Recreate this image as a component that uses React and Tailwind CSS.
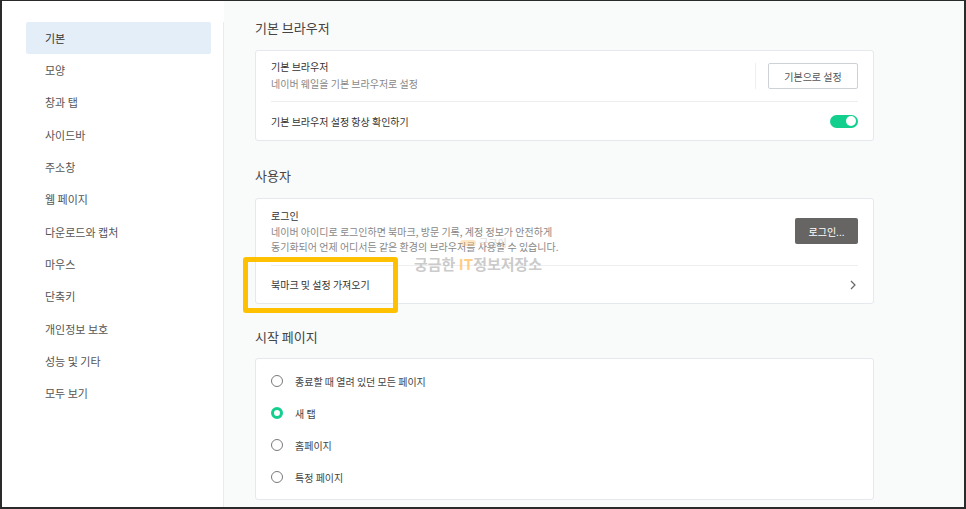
import React from 'react';

const menu = [
  '기본', '모양', '창과 탭', '사이드바', '주소창', '웹 페이지',
  '다운로드와 캡처', '마우스', '단축키', '개인정보 보호', '성능 및 기타', '모두 보기',
];

const startPages = [
  { label: '종료할 때 열려 있던 모든 페이지', checked: false },
  { label: '새 탭', checked: true },
  { label: '홈페이지', checked: false },
  { label: '특정 페이지', checked: false },
];

const Radio = ({ checked }) =>
  checked ? (
    <span className="w-[12px] h-[12px] rounded-full border-[3.5px] border-[#12cf8d] bg-white shrink-0" />
  ) : (
    <span className="w-[12px] h-[12px] rounded-full border border-[#7a7a7a] bg-white shrink-0" />
  );

const App = () => {
  return (
    <div className="w-[966px] h-[509px] overflow-hidden border-t border-l-2 border-r-2 border-b-2 border-[#2a2a2a] flex bg-white font-['Noto_Sans_CJK_KR',sans-serif]">
      {/* Sidebar */}
      <aside className="w-[222px] shrink-0 flex flex-col pt-[21px] bg-white">
        <nav className="flex-1 border-r border-[#e9ebee] pl-[24px] pr-[12px]">
          {menu.map((item, i) => (
            <div
              key={item}
              className={`h-[32.3px] flex items-center pl-[19px] rounded-[2px] text-[11px] ${
                i === 0 ? 'bg-[#e4eef9] text-[#333]' : 'text-[#555]'
              }`}
            >
              {item}
            </div>
          ))}
        </nav>
      </aside>

      {/* Main */}
      <main className="flex-1 relative bg-[#f9fafa] pl-[31px] pt-[17px]">
        <div className="w-[619px]">
          {/* 기본 브라우저 */}
          <h2 className="h-[20px] leading-[20px] text-[13px] text-[#444] mb-[12px]">기본 브라우저</h2>
          <div className="bg-white border border-[#e5e8ec] rounded-[3px] px-[15px]">
            <div className="h-[51px] flex items-center border-b border-[#eceef0]">
              <div className="flex-1 -mt-[3px]">
                <div className="text-[10px] leading-[17px] text-[#333]">기본 브라우저</div>
                <div className="text-[10px] leading-[17px] text-[#888]">네이버 웨일을 기본 브라우저로 설정</div>
              </div>
              <div className="w-px h-[26px] bg-[#eceef0] mr-[12px]" />
              <button className="w-[90px] h-[26px] border border-[#cfd2d5] rounded-[2px] bg-white text-[10px] text-[#555]">
                기본으로 설정
              </button>
            </div>
            <div className="h-[38px] flex items-center">
              <div className="flex-1 text-[10px] text-[#333]">기본 브라우저 설정 항상 확인하기</div>
              <div className="w-[28px] h-[13px] rounded-full bg-[#12cf8d] flex items-center justify-end pr-[2px]">
                <span className="w-[10px] h-[10px] rounded-full bg-white" />
              </div>
            </div>
          </div>

          {/* 사용자 */}
          <h2 className="mt-[25px] h-[20px] leading-[20px] text-[13px] text-[#444] mb-[12px]">사용자</h2>
          <div className="bg-white border border-[#e5e8ec] rounded-[3px] px-[15px]">
            <div className="flex items-center border-b border-[#eceef0] pt-[9px] pb-[11px]">
              <div className="flex-1">
                <div className="text-[10px] leading-[16px] text-[#333]">로그인</div>
                <div className="text-[10px] leading-[15px] text-[#888]">
                  네이버 아이디로 로그인하면 북마크, 방문 기록, 계정 정보가 안전하게
                  <br />
                  동기화되어 언제 어디서든 같은 환경의 브라우저를 사용할 수 있습니다.
                </div>
              </div>
              <button className="w-[63px] h-[26px] rounded-[2px] bg-[#666564] text-white text-[10px]">
                로그인...
              </button>
            </div>
            <div className="h-[37px] flex items-center">
              <div className="flex-1 text-[10px] text-[#333]">북마크 및 설정 가져오기</div>
              <svg width="8" height="10" viewBox="0 0 8 10" className="mr-[1px]">
                <path d="M2 1 L6 5 L2 9" fill="none" stroke="#666" strokeWidth="1.2" />
              </svg>
            </div>
          </div>

          {/* 시작 페이지 */}
          <h2 className="mt-[23px] h-[20px] leading-[20px] text-[13px] text-[#444] mb-[11px]">시작 페이지</h2>
          <div className="bg-white border border-[#e5e8ec] rounded-[3px] px-[15px] py-[6px]">
            {startPages.map((p) => (
              <div key={p.label} className="h-[32px] flex items-center gap-[12px]">
                <Radio checked={p.checked} />
                <span className="text-[10px] text-[#444]">{p.label}</span>
              </div>
            ))}
          </div>
        </div>

        {/* watermark */}
        <div className="absolute left-[236px] top-[234px] flex items-center gap-[3px] opacity-30">
          <span className="w-[16px] h-[6px] rounded-full bg-[#ffb347]" />
          <span className="text-[10px] font-bold text-[#aaa]">궁금이</span>
        </div>
        <div className="absolute left-[190px] top-[253px] text-[15px] font-bold leading-[20px] text-[#b4b4b4]/70 whitespace-nowrap">
          궁금한 <span className="text-[#ffb84d]/70">IT</span>정보저장소
        </div>

        {/* highlight */}
        <div className="absolute left-[19px] top-[256px] w-[155px] h-[56px] border-[5px] border-[#ffc000] rounded-[3px]" />
      </main>
    </div>
  );
};

export default App;
